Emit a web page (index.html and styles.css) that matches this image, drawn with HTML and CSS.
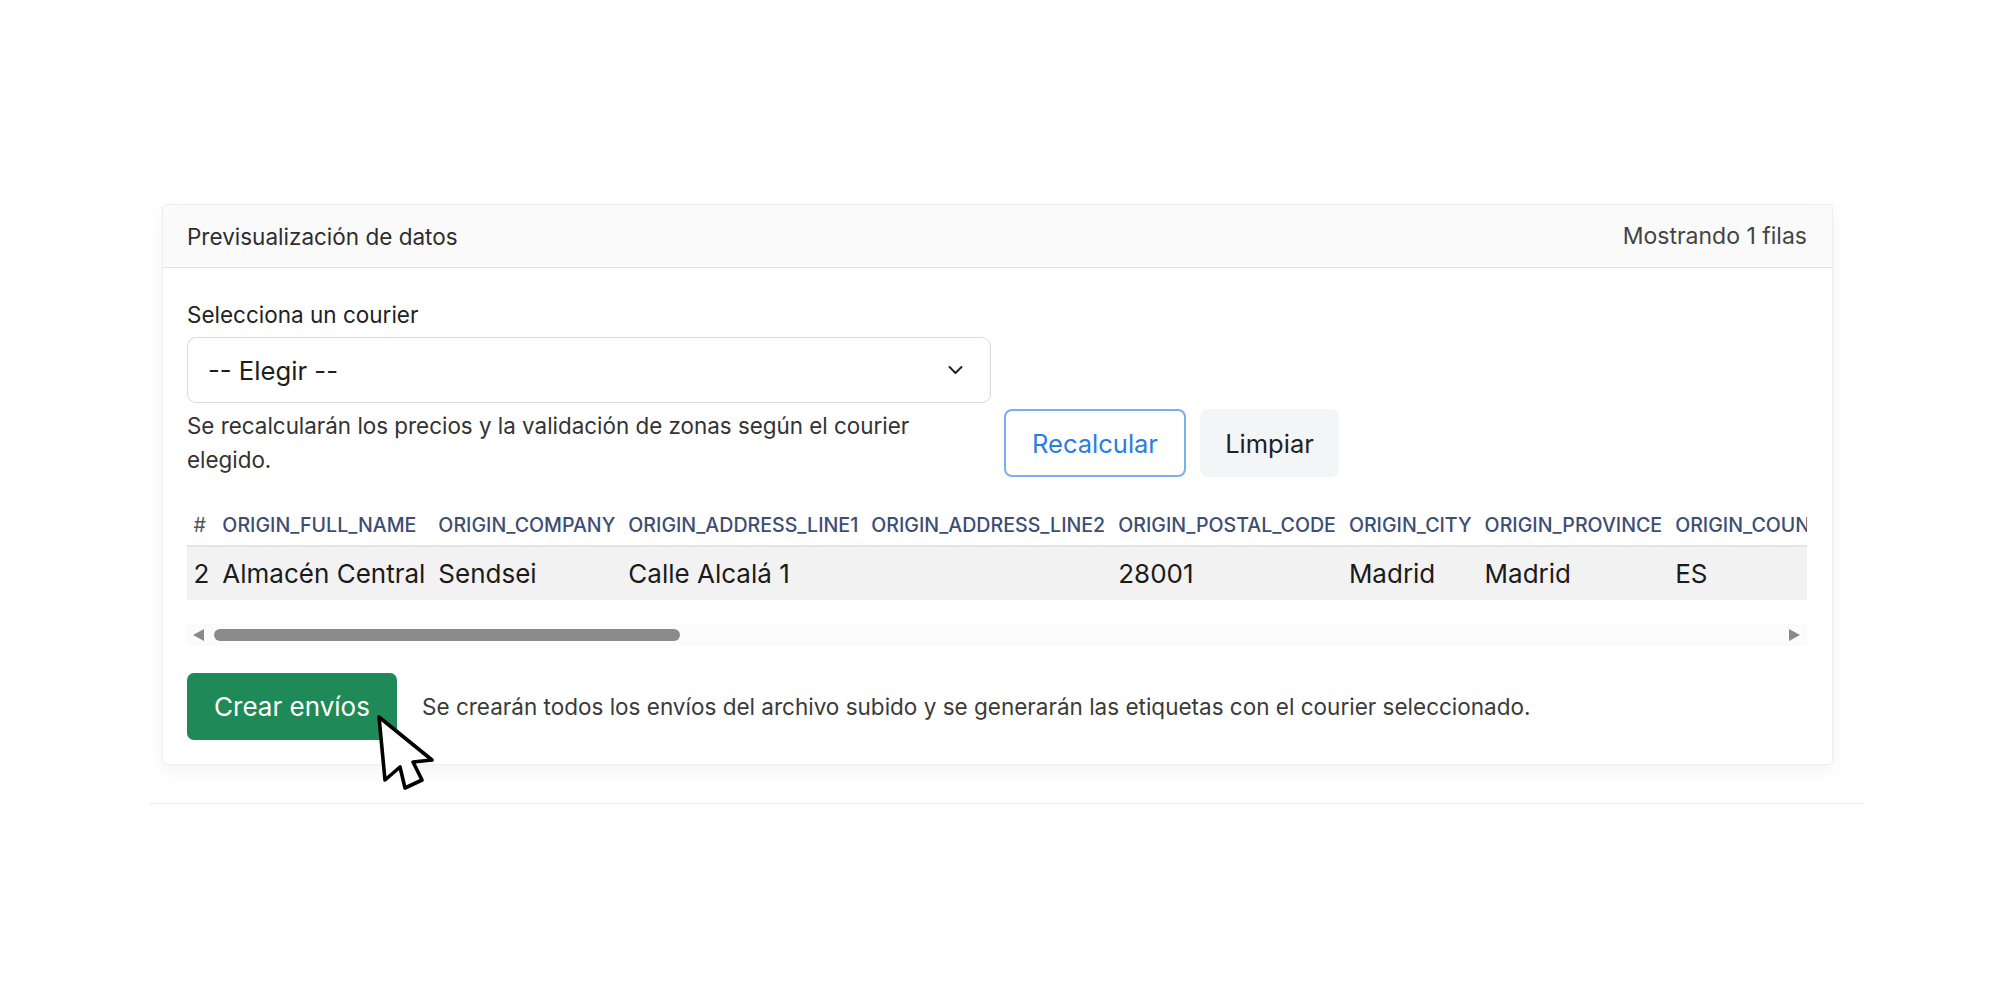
FILE: index.html
```html
<!DOCTYPE html>
<html lang="es">
<head>
<meta charset="utf-8">
<title>Previsualización de datos</title>
<link rel="stylesheet" href="styles.css">
</head>
<body>
<div class="page">
  <section class="card">
    <header class="card-header">
      <span class="card-title">Previsualización de datos</span>
      <span class="card-meta">Mostrando 1 filas</span>
    </header>
    <div class="card-body">
      <div class="controls">
        <div class="courier-col">
          <label class="field-label">Selecciona un courier</label>
          <div class="select">
            <span class="select-value">-- Elegir --</span>
            <svg class="chevron" viewBox="0 0 16 10" width="17" height="10"><path d="M2 2 L8 8 L14 2" fill="none" stroke="#222" stroke-width="2" stroke-linecap="round" stroke-linejoin="round"/></svg>
          </div>
          <p class="help">Se recalcularán los precios y la validación de zonas según el courier elegido.</p>
        </div>
        <div class="actions">
          <button class="btn btn-outline">Recalcular</button>
          <button class="btn btn-light">Limpiar</button>
        </div>
      </div>

      <div class="table-wrap">
        <table class="preview">
          <thead>
            <tr>
              <th>#</th>
              <th>ORIGIN_FULL_NAME</th>
              <th>ORIGIN_COMPANY</th>
              <th>ORIGIN_ADDRESS_LINE1</th>
              <th>ORIGIN_ADDRESS_LINE2</th>
              <th>ORIGIN_POSTAL_CODE</th>
              <th>ORIGIN_CITY</th>
              <th>ORIGIN_PROVINCE</th>
              <th>ORIGIN_COUNTRY</th>
            </tr>
          </thead>
          <tbody>
            <tr>
              <td>2</td>
              <td>Almacén Central</td>
              <td>Sendsei</td>
              <td>Calle Alcalá 1</td>
              <td></td>
              <td>28001</td>
              <td>Madrid</td>
              <td>Madrid</td>
              <td>ES</td>
            </tr>
          </tbody>
        </table>
      </div>

      <div class="scrollbar">
        <span class="arrow arrow-left"></span>
        <div class="track"><div class="thumb"></div></div>
        <span class="arrow arrow-right"></span>
      </div>

      <div class="footer-row">
        <div class="create-wrap">
          <button class="btn btn-success">Crear envíos</button>
          <svg class="cursor" viewBox="0 0 62 80" width="62" height="80"><path d="M4 4 L10 67 L25 54 L30 75 L47 67 L38 49 L57 47 Z" fill="#fff" stroke="#000" stroke-width="3.6" stroke-linejoin="round"/></svg>
        </div>
        <p class="footer-note">Se crearán todos los envíos del archivo subido y se generarán las etiquetas con el courier seleccionado.</p>
      </div>
    </div>
  </section>
  <div class="rule"></div>
</div>
</body>
</html>
```

FILE: styles.css
```css
* { box-sizing: border-box; }

html, body {
  margin: 0;
  padding: 0;
  background: #ffffff;
}

body {
  font-family: "Inter", "Liberation Sans", sans-serif;
  color: #222;
}

.page {
  width: 1715px;
  margin-left: 150px;
  padding-top: 204px;
}

.card {
  margin: 0 32px 0 12px;
  border: 1px solid #eceeef;
  border-radius: 4px;
  background: #fff;
  box-shadow: 0 6px 18px rgba(0, 0, 0, 0.05);
}

.card-header {
  height: 63px;
  padding: 0 25px 0 24px;
  display: flex;
  align-items: center;
  justify-content: space-between;
  background: #fafafa;
  border-bottom: 1px solid #e2e3e4;
  font-size: 22.5px;
  color: #2e2e2e;
}

.card-meta {
  color: #444;
  font-size: 23px;
}

.card-body {
  padding: 33px 25px 24px 24px;
}

.controls {
  display: flex;
  align-items: flex-end;
  gap: 13px;
}

.courier-col {
  width: 804px;
}

.field-label {
  display: block;
  font-size: 22.5px;
  line-height: 28px;
  color: #222;
  margin-bottom: 8px;
}

.select {
  height: 66px;
  border: 1px solid #d8d9da;
  border-radius: 9px;
  display: flex;
  align-items: center;
  justify-content: space-between;
  padding: 0 26px 0 20px;
  background: #fff;
}

.select-value {
  font-size: 25.7px;
  color: #1e1e1e;
}

.help {
  margin: 6px 0 0;
  max-width: 760px;
  font-size: 22.4px;
  line-height: 34px;
  color: #333;
}

.actions {
  display: flex;
  gap: 14px;
}

.btn {
  font-family: "Inter", "Liberation Sans", sans-serif;
  font-size: 25.5px;
  height: 68px;
  border-radius: 8px;
  cursor: pointer;
}

.btn-outline {
  width: 182px;
  background: #fff;
  color: #2a7de1;
  border: 2px solid #79aef0;
}

.btn-light {
  width: 139px;
  background: #f4f5f6;
  color: #222;
  border: none;
}

.table-wrap {
  margin-top: 27px;
  overflow: hidden;
  width: 100%;
}

.preview {
  border-collapse: collapse;
  white-space: nowrap;
}

.preview th {
  height: 42px;
  padding: 0 6.5px;
  text-align: left;
  font-size: 19.6px;
  font-weight: 500;
  color: #3d4d73;
  vertical-align: middle;
}

.preview th:first-child {
  color: #555;
  font-weight: 400;
}

.preview td {
  height: 54px;
  padding: 0 6.5px;
  font-size: 26px;
  color: #1b1b1b;
  background: #f2f2f2;
  border-top: 2px solid #e4e4e4;
  vertical-align: middle;
}

.scrollbar {
  margin-top: 24px;
  height: 22px;
  display: flex;
  align-items: center;
  background: #fbfbfb;
}

.arrow {
  width: 0;
  height: 0;
  border-top: 6.5px solid transparent;
  border-bottom: 6.5px solid transparent;
}

.arrow-left {
  margin-left: 6px;
  border-right: 11px solid #8a8a8a;
}

.arrow-right {
  margin-right: 7px;
  border-left: 11px solid #8a8a8a;
}

.track {
  flex: 1;
  padding-left: 10px;
}

.thumb {
  width: 466px;
  height: 12px;
  border-radius: 6px;
  background: #8b8b8b;
}

.footer-row {
  margin-top: 27px;
  display: flex;
  align-items: center;
  gap: 25px;
}

.create-wrap {
  position: relative;
}

.btn-success {
  width: 210px;
  height: 67px;
  background: #1f8a58;
  color: #fff;
  border: none;
  font-size: 26px;
  border-radius: 7px;
  display: block;
}

.cursor {
  position: absolute;
  left: 188px;
  top: 40px;
}

.footer-note {
  margin: 0;
  font-size: 22.5px;
  color: #3a3a3a;
}

.rule {
  margin-top: 38px;
  height: 1px;
  background: #ebebeb;
}
```
